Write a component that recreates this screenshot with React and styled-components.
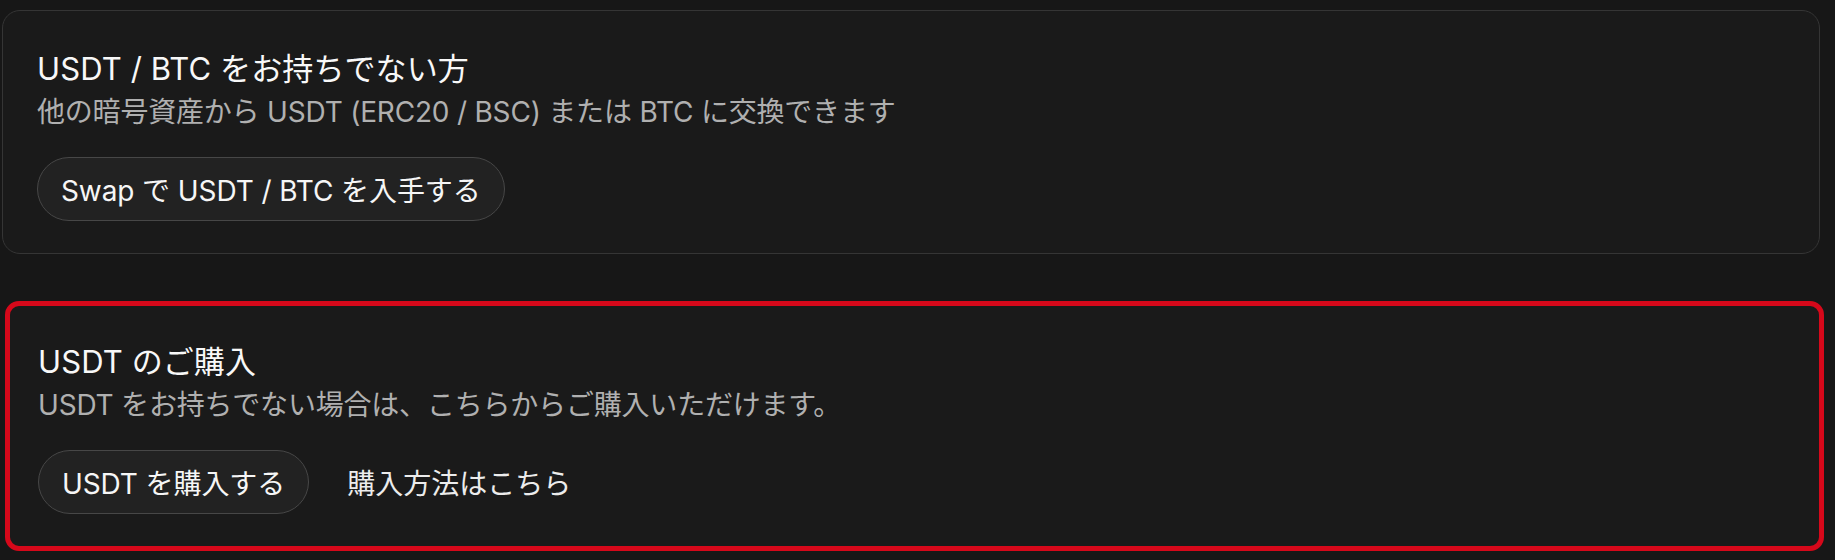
import styled, { createGlobalStyle } from "styled-components";

const GlobalStyle = createGlobalStyle`
  html, body {
    margin: 0;
    padding: 0;
    background: #171717;
  }
  body {
    font-family: Inter, "Noto Sans CJK JP", "Noto Sans", sans-serif;
    color: #f2f2f2;
    -webkit-font-smoothing: antialiased;
  }
`;

const Page = styled.div`
  display: flex;
  flex-direction: column;
  gap: 47px;
  padding: 10px 15px 0 2px;
  width: 1835px;
  height: 560px;
  box-sizing: border-box;
  overflow: hidden;
`;

const Card = styled.section`
  box-sizing: border-box;
  background: #1a1a1a;
  border: ${(p) => (p.$highlight ? "5px solid #d6081a" : "1px solid #353535")};
  border-radius: ${(p) => (p.$highlight ? "14px" : "18px")};
  padding: ${(p) => (p.$highlight ? "36px 28px 32px" : "38px 34px 32px")};
  margin-left: ${(p) => (p.$highlight ? "3px" : "0")};
  margin-right: ${(p) => (p.$highlight ? "-4px" : "0")};
  display: flex;
  flex-direction: column;
`;

const Title = styled.h2`
  margin: 0;
  font-size: 31px;
  line-height: 40px;
  font-weight: 400;
  color: #f8f8f8;
  letter-spacing: 0.1px;
`;

const Desc = styled.p`
  margin: 2px 0 0;
  font-size: 28px;
  line-height: 42px;
  font-weight: 400;
  color: #b0b0b0;
  letter-spacing: -0.2px;
`;

const Actions = styled.div`
  display: flex;
  align-items: center;
  gap: 38px;
  margin-top: 24px;
`;

const PillButton = styled.button`
  box-sizing: border-box;
  height: 64px;
  padding: 0 23px;
  border-radius: 32px;
  border: 1.5px solid #474747;
  background: #222222;
  color: #f6f6f6;
  font-family: inherit;
  font-size: 28px;
  font-weight: 400;
  letter-spacing: -0.1px;
  cursor: pointer;
  white-space: nowrap;
`;

const TextLink = styled.a`
  font-size: 28px;
  font-weight: 400;
  color: #ececec;
  text-decoration: none;
  cursor: pointer;
`;

export default function App() {
  return (
    <>
      <GlobalStyle />
      <Page>
        <Card>
          <Title>USDT / BTC をお持ちでない方</Title>
          <Desc>他の暗号資産から USDT (ERC20 / BSC) または BTC に交換できます</Desc>
          <Actions>
            <PillButton>Swap で USDT / BTC を入手する</PillButton>
          </Actions>
        </Card>
        <Card $highlight>
          <Title>USDT のご購入</Title>
          <Desc>USDT をお持ちでない場合は、こちらからご購入いただけます。</Desc>
          <Actions>
            <PillButton>USDT を購入する</PillButton>
            <TextLink>購入方法はこちら</TextLink>
          </Actions>
        </Card>
      </Page>
    </>
  );
}
